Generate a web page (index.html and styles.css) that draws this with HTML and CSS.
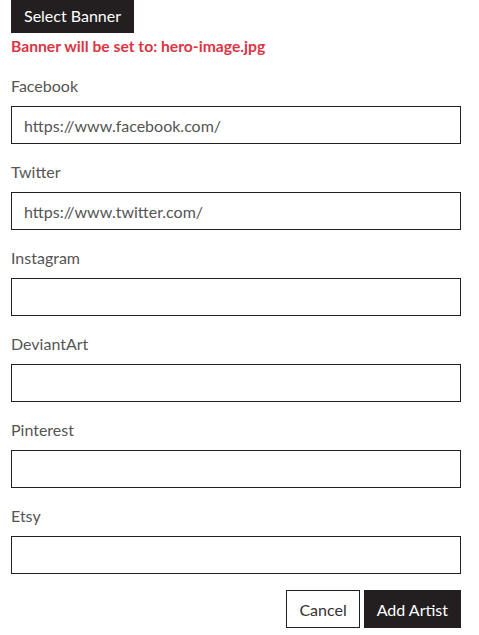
FILE: index.html
```html
<!DOCTYPE html>
<html>
<head>
<meta charset="utf-8">
<link rel="stylesheet" href="styles.css">
</head>
<body>
<div class="page">
  <button class="btn btn-dark btn-select">Select Banner</button>
  <p class="notice">Banner will be set to: hero-image.jpg</p>
  <div class="field">
    <label>Facebook</label>
    <input type="text" value="https://www.facebook.com/">
  </div>
  <div class="field">
    <label>Twitter</label>
    <input type="text" value="https://www.twitter.com/">
  </div>
  <div class="field">
    <label>Instagram</label>
    <input type="text" value="">
  </div>
  <div class="field">
    <label>DeviantArt</label>
    <input type="text" value="">
  </div>
  <div class="field">
    <label>Pinterest</label>
    <input type="text" value="">
  </div>
  <div class="field">
    <label>Etsy</label>
    <input type="text" value="">
  </div>
  <div class="actions">
    <button class="btn btn-light">Cancel</button>
    <button class="btn btn-dark">Add Artist</button>
  </div>
</div>
</body>
</html>
```
FILE: styles.css
```css
html, body {
  margin: 0;
  padding: 0;
  background: #fff;
}
body {
  font-family: Lato, "Liberation Sans", sans-serif;
  font-size: 16px;
  color: #555;
}
.page {
  width: 450px;
  padding: 0 0 0 11px;
  display: flex;
  flex-direction: column;
}
.btn {
  font-family: Lato, "Liberation Sans", sans-serif;
  font-size: 16px;
  height: 38px;
  padding: 0 12px;
  border: 1px solid #231f20;
  cursor: pointer;
}
.btn-dark {
  background: #231f20;
  color: #fff;
}
.btn-light {
  background: #fff;
  color: #333;
}
.btn-select {
  align-self: flex-start;
  height: 33px;
  padding: 0 12px 2px;
}
.notice {
  margin: 3px 0 0 0;
  line-height: 20px;
  font-size: 15.7px;
  font-weight: bold;
  color: #dc3545;
}
.field {
  display: flex;
  flex-direction: column;
  margin-top: 20px;
}
.field + .field {
  margin-top: 18px;
}
.field label {
  line-height: 20px;
  margin-bottom: 10px;
}
.field input {
  box-sizing: border-box;
  height: 38px;
  width: 450px;
  border: 1px solid #231f20;
  padding: 0 12px;
  font-family: Lato, "Liberation Sans", sans-serif;
  font-size: 16px;
  color: #555;
  margin: 0;
  outline: none;
}
.actions {
  display: flex;
  justify-content: flex-end;
  gap: 4px;
  margin-top: 16px;
}
```
